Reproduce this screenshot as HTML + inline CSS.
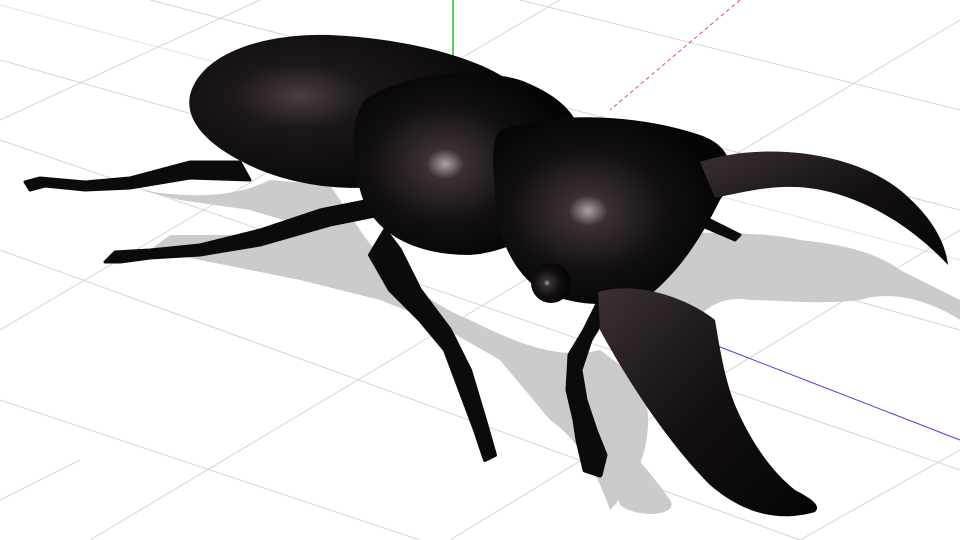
<!DOCTYPE html>
<html><head><meta charset="utf-8"><style>
html,body{margin:0;padding:0;background:#fff;width:960px;height:540px;overflow:hidden}
</style></head><body>
<svg width="960" height="540" viewBox="0 0 960 540" xmlns="http://www.w3.org/2000/svg">
<defs>
<radialGradient id="g1" cx="0.35" cy="0.4" r="0.7">
<stop offset="0" stop-color="#4a3e40"/><stop offset="0.3" stop-color="#1c1718"/><stop offset="1" stop-color="#060505"/>
</radialGradient>
<radialGradient id="g2" cx="0.4" cy="0.5" r="0.55">
<stop offset="0" stop-color="#b0a2a4"/><stop offset="0.15" stop-color="#3a3033"/><stop offset="0.6" stop-color="#120f10"/><stop offset="1" stop-color="#060505"/>
</radialGradient>
<linearGradient id="g3" x1="0" y1="0" x2="1" y2="1">
<stop offset="0" stop-color="#3a3032"/><stop offset="0.5" stop-color="#141011"/><stop offset="1" stop-color="#050404"/>
</linearGradient>
</defs>
<g stroke="#d4d4d4" stroke-width="1" fill="none">
<line x1="0" y1="60" x2="960" y2="330"/>
<line x1="0" y1="140" x2="960" y2="470"/>
<line x1="0" y1="250" x2="800" y2="540"/>
<line x1="0" y1="400" x2="420" y2="540"/>
<line x1="150" y1="0" x2="960" y2="210"/>
<line x1="520" y1="0" x2="960" y2="110"/>
<line x1="0" y1="5" x2="960" y2="260" stroke="#e2e2e2"/>
<line x1="0" y1="120" x2="260" y2="0"/>
<line x1="0" y1="330" x2="560" y2="0"/>
<line x1="90" y1="540" x2="960" y2="20"/>
<line x1="450" y1="540" x2="960" y2="230"/>
<line x1="800" y1="540" x2="960" y2="450"/>
<line x1="0" y1="500" x2="80" y2="460"/>
<line x1="740" y1="0" x2="610" y2="110" stroke="#e05050" stroke-dasharray="4,3"/>
<line x1="715" y1="345" x2="960" y2="440" stroke="#4040e0"/>
</g>
<g fill="#cbcbcb">
<path d="M140,190 C200,200 240,195 270,180 L330,185 L360,230 C380,260 420,300 470,320 C520,345 560,360 600,350 L640,380 C660,430 640,480 610,510 C600,480 580,440 550,420 L500,360 L430,320 L380,300 L300,280 L200,260 L150,250 L170,235 L260,235 L300,225 L250,210 L180,200 Z"/>
<path d="M640,230 C700,235 760,230 800,240 C850,245 880,255 900,270 C930,285 950,295 960,300 L960,320 C930,300 890,290 860,300 C820,305 780,300 750,300 C720,295 700,310 690,330 L650,320 Z"/>
<path d="M600,420 C620,440 650,470 670,500 C680,515 640,520 620,505 Z"/>
</g>
<line x1="453" y1="0" x2="453" y2="86" stroke="#20c020" stroke-width="1.5"/>
<g fill="#0c0a0a" stroke="#0c0a0a" stroke-linecap="round" stroke-linejoin="round">
<path d="M240,162 L190,162 L130,178 L85,182 L40,178 L25,182 L30,190 L45,186 L85,190 L130,188 L190,178 L250,180 Z" stroke-width="3"/>
<path d="M370,200 L320,210 L260,230 L200,245 L150,250 L115,252 L105,262 L120,262 L150,258 L200,255 L260,245 L330,225 L380,215 Z" stroke-width="3"/>
<path d="M385,230 L370,255 L390,290 L420,320 L445,350 L460,390 L475,430 L485,460 L495,455 L485,420 L470,370 L450,330 L420,290 L400,250 Z" stroke-width="4"/>
<path d="M600,300 L585,330 L570,355 L568,390 L575,420 L578,440 L585,470 L600,475 L605,455 L595,430 L585,400 L580,370 L590,340 L605,315 Z" stroke-width="5"/>
<path d="M680,200 L700,215 L720,225 L740,235 L735,240 L700,225 L685,215 Z" stroke-width="3"/>
</g>
<path d="M190,95 C200,55 260,33 330,35 C400,38 470,55 505,78 L480,150 C430,190 340,200 265,172 C215,152 184,125 190,95Z" fill="url(#g1)"/>
<path d="M365,100 C400,75 470,65 520,80 C560,95 590,120 580,160 C570,210 530,250 470,255 C410,255 370,230 360,190 C352,150 350,120 365,100Z" fill="url(#g2)"/>
<path d="M500,130 C560,110 640,115 700,135 C730,145 740,170 720,200 C700,240 680,270 650,295 C610,310 570,305 540,290 C510,270 495,230 495,190 C492,160 492,140 500,130Z" fill="url(#g2)"/>
<path d="M700,162 C760,142 850,150 900,190 C930,215 945,240 948,265 C920,235 880,205 830,192 C790,182 760,188 715,198 Z" fill="url(#g3)"/>
<path d="M598,292 C640,280 690,300 715,320 C720,350 725,380 735,405 C750,440 770,470 795,490 C810,498 822,505 815,512 C780,522 745,515 710,485 C670,445 630,385 600,330Z" fill="url(#g3)"/>
<circle cx="551" cy="283" r="20" fill="url(#g2)"/>
</svg>
</body></html>
